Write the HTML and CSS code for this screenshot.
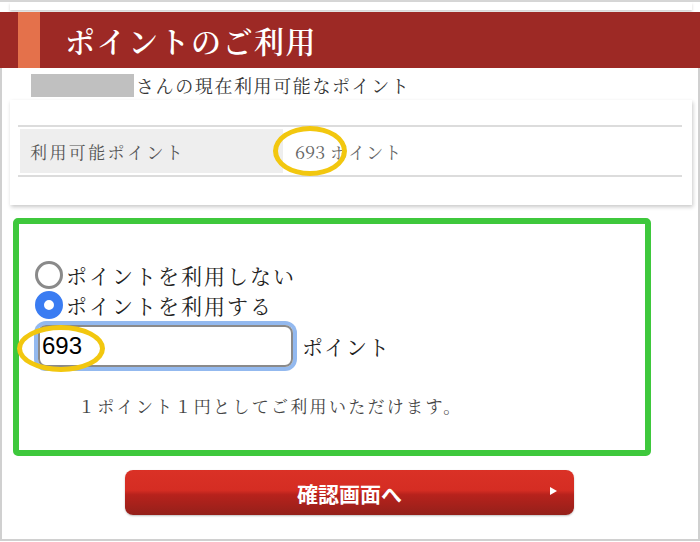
FILE: index.html
```html
<!DOCTYPE html>
<html lang="ja">
<head>
<meta charset="utf-8">
<link rel="stylesheet" href="styles.css">
</head>
<body>
<div class="top"><div class="topcard"></div></div>
<div class="header">
  <span class="accent"></span>
  <h1 class="title">ポイントのご利用</h1>
</div>
<div class="frame">
  <div class="intro"><span class="mask"></span><span class="intro-text">さんの現在利用可能なポイント</span></div>
  <div class="card">
    <div class="row">
      <div class="label">利用可能ポイント</div>
      <div class="value"><span class="num">693</span> ポイント</div>
      <span class="ring ring-a"></span>
    </div>
  </div>
  <div class="greenbox">
    <div class="radio-row"><span class="radio"></span><span class="radio-label">ポイントを利用しない</span></div>
    <div class="radio-row"><span class="radio checked"></span><span class="radio-label">ポイントを利用する</span></div>
    <div class="input-row">
      <div class="input">693<span class="ring ring-b"></span></div>
      <span class="unit">ポイント</span>
    </div>
    <p class="note">１ポイント１円としてご利用いただけます。</p>
  </div>
  <div class="btn">確認画面へ<span class="arrow"></span></div>
</div>
</body>
</html>
```
FILE: styles.css
```css
* { box-sizing: border-box; }
html, body { margin: 0; padding: 0; background: #fff; }
body {
  width: 700px;
  height: 542px;
  overflow: hidden;
  font-family: "Noto Serif CJK JP", "Noto Sans CJK JP", serif;
  color: #333;
}
.top {
  height: 12px;
  border-top: 2px solid #d6d6d6;
  padding: 0 8px 0 10px;
}
.topcard {
  height: 8px;
  background: #fff;
  box-shadow: 0 2px 3px rgba(0,0,0,0.18);
}
.header {
  height: 56px;
  background: #9d2925;
  display: flex;
  align-items: stretch;
  padding-left: 18px;
}
.accent {
  width: 22px;
  background: #e4714b;
}
.title {
  margin: 0 0 0 25px;
  align-self: center;
  color: #fff;
  font-size: 30px;
  font-weight: 600;
  letter-spacing: 1.5px;
  line-height: 1;
}
.frame {
  width: 700px;
  height: 473px;
  border-left: 2px solid #d0d0d0;
  border-right: 2px solid #d0d0d0;
  border-bottom: 2px solid #d0d0d0;
  padding-top: 6px;
}
.intro {
  display: flex;
  align-items: center;
  height: 23px;
  padding-left: 29px;
}
.mask {
  width: 103px;
  height: 23px;
  background: #c0c0c0;
}
.intro-text {
  margin-left: 2px;
  margin-top: -2px;
  font-size: 18px;
  letter-spacing: 1.6px;
  color: #333;
}
.card {
  margin: 3px 0 0 8px;
  width: 682px;
  height: 105px;
  background: #fff;
  box-shadow: 1px 2px 4px rgba(0,0,0,0.22);
  padding: 25px 10px 0 8px;
}
.row {
  position: relative;
  display: flex;
  align-items: stretch;
  height: 52px;
  border-top: 2px solid #dcdcdc;
  border-bottom: 2px solid #dcdcdc;
  padding: 2px;
}
.label {
  width: 263px;
  background: #eeeeee;
  padding-left: 10px;
  display: flex;
  align-items: center;
  font-size: 17px;
  letter-spacing: 2.4px;
  color: #555;
}
.value {
  padding-left: 12px;
  display: flex;
  align-items: center;
  font-size: 17px;
  letter-spacing: 1px;
  color: #666;
}
.num { margin-right: 5px; letter-spacing: 0; font-size: 18px; }
.ring {
  position: absolute;
  border: 5px solid #f2c70f;
  border-radius: 50%;
  pointer-events: none;
}
.ring-a { left: 255px; top: -1px; width: 74px; height: 50px; }
.greenbox {
  margin: 13px 0 0 11px;
  width: 638px;
  height: 238px;
  border: 6px solid #3ec83c;
  border-radius: 5px;
  padding: 36px 0 0 16px;
}
.radio-row {
  display: flex;
  align-items: center;
  height: 30px;
}
.radio {
  width: 28px;
  height: 28px;
  border-radius: 50%;
  border: 3px solid #8a8a8a;
  background: #fff;
  flex: none;
}
.radio.checked {
  border: 9px solid #3a7cf2;
  background: #fff;
}
.radio-label {
  font-size: 21px;
  letter-spacing: 2px;
  color: #222;
  margin-left: 3px;
}
.input-row {
  display: flex;
  align-items: center;
  margin-top: 5px;
  padding-left: 3px;
}
.input {
  position: relative;
  width: 255px;
  height: 42px;
  border: 2px solid #8a8a8a;
  border-radius: 8px;
  box-shadow: 0 0 0 4px #93b9ef;
  padding-left: 2px;
  display: flex;
  align-items: center;
  font-family: "Liberation Sans", Arial, sans-serif;
  font-size: 24px;
  color: #000;
}
.ring-b { left: -23px; top: -2px; width: 88px; height: 47px; }
.unit {
  margin-left: 9px;
  font-size: 21px;
  letter-spacing: 1px;
  color: #222;
}
.note {
  margin: 27px 0 0 43px;
  font-size: 17px;
  letter-spacing: 2.3px;
  line-height: 24px;
  color: #444;
}
.btn {
  position: relative;
  margin: 14px 0 0 123px;
  width: 449px;
  height: 45px;
  border-radius: 8px;
  background: linear-gradient(#da3126 0%, #d52d23 45%, #b7221c 55%, #94201a 100%);
  box-shadow: 0 1px 2px rgba(0,0,0,0.25);
  color: #fff;
  font-family: "Noto Sans CJK JP", sans-serif;
  font-weight: 700;
  font-size: 21px;
  display: flex;
  align-items: center;
  justify-content: center;
}
.arrow {
  position: absolute;
  right: 17px;
  top: 17px;
  width: 0;
  height: 0;
  border-left: 7px solid #fff;
  border-top: 4px solid transparent;
  border-bottom: 4px solid transparent;
}
```
